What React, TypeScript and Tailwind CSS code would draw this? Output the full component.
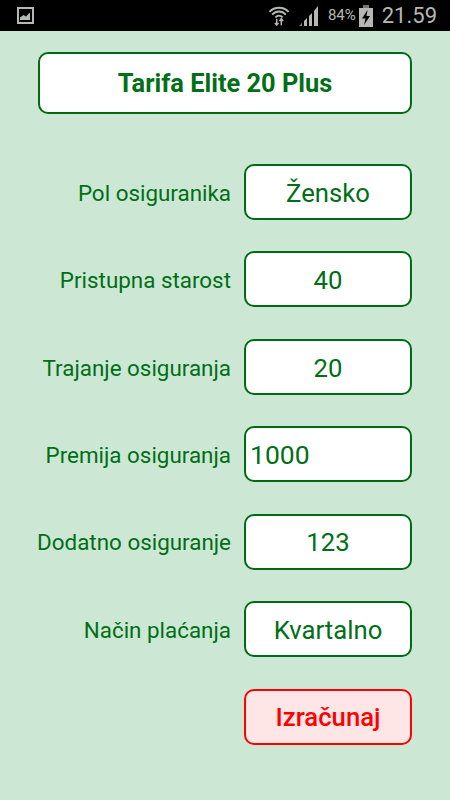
import React from "react";

const rows = [
  { label: "Pol osiguranika", value: "Žensko" },
  { label: "Pristupna starost", value: "40" },
  { label: "Trajanje osiguranja", value: "20" },
  { label: "Premija osiguranja", value: "1000", input: true },
  { label: "Dodatno osiguranje", value: "123" },
  { label: "Način plaćanja", value: "Kvartalno" },
];

function StatusBar() {
  return (
    <div className="h-[31px] bg-black flex items-center pl-[17px] pr-[13px] text-[#b5b8b5] shrink-0">
      <svg width="17" height="17" viewBox="0 0 17 17" className="mb-[1px]">
        <rect x="1" y="1" width="15" height="15" fill="none" stroke="#b5b8b5" strokeWidth="2" />
        <path d="M3 13 V10.5 L6.5 8 L9 9.5 L13 5.5 V13 Z" fill="#b5b8b5" />
      </svg>
      <div className="flex-1" />
      <svg width="22" height="24" viewBox="0 0 24 24" fill="none" stroke="#b5b8b5" className="mr-[9px]">
        <path d="M1.5 7.5 C7 1.5 17 1.5 22.5 7.5" strokeWidth="2" />
        <path d="M4.5 10.5 C9 6 15 6 19.5 10.5" strokeWidth="2" />
        <path d="M8 13.5 C10.5 11 13.5 11 16 13.5" strokeWidth="2" />
        <path d="M9.5 15 V22 M7.5 19.5 L9.5 22 L11.5 19.5 M14.5 22 V15 M12.5 17.5 L14.5 15 L16.5 17.5" strokeWidth="1.6" />
      </svg>
      <svg width="21" height="22" viewBox="0 0 21 22" fill="#b5b8b5" className="mr-[8px]">
        <path d="M0 21 L3 18 V21 Z" opacity="0.7" />
        <path d="M5 21 V16 L8 13 V21 Z" />
        <path d="M10 21 V11 L13 8 V21 Z" />
        <path d="M15 21 V6 L19 1 V21 Z" />
      </svg>
      <span className="text-[15px] leading-none mr-[3px] font-['Roboto',sans-serif]">84%</span>
      <svg width="14" height="22" viewBox="0 0 14 22" className="mr-[9px]">
        <rect x="4" y="0" width="6" height="3" fill="#777" />
        <rect x="0" y="3" width="14" height="19" fill="#b5b8b5" />
        <path d="M8.5 5 L3 13.5 H6.5 L5 20 L11 11 H7.5 Z" fill="#000" />
      </svg>
      <span className="text-[22px] leading-none font-['Roboto',sans-serif]">21.59</span>
    </div>
  );
}

export default function App() {
  return (
    <div className="w-[450px] h-[800px] overflow-hidden bg-[#cde7d5] flex flex-col font-['Roboto',sans-serif] text-[#006f16]">
      <StatusBar />
      <div className="mx-[38px] mt-[21px] h-[62px] rounded-[10px] border-2 border-[#006b14] bg-white flex items-center justify-center text-[25.4px] font-bold">
        Tarifa Elite 20 Plus
      </div>
      <div className="mt-[50px] pl-[20px] pr-[38px] flex flex-col gap-[31.4px]">
        {rows.map((row) => (
          <div key={row.label} className="flex items-center justify-end gap-[13px]">
            <span className="text-[22.4px] leading-none pt-[2px]">{row.label}</span>
            <div
              className={
                "w-[168px] h-[56px] pt-[2px] rounded-[10px] border-2 border-[#006b14] bg-white flex items-center text-[25.7px] " +
                (row.input ? "justify-start pl-[4px] text-[26.5px]" : "justify-center")
              }
            >
              {row.value}
            </div>
          </div>
        ))}
      </div>
      <div className="mt-[32px] pr-[38px] flex justify-end">
        <div className="w-[168px] h-[56px] rounded-[10px] border-2 border-[#ff0000] bg-[#ffe6e6] text-[#ff0000] flex items-center justify-center text-[25.7px] font-medium">
          Izračunaj
        </div>
      </div>
    </div>
  );
}
